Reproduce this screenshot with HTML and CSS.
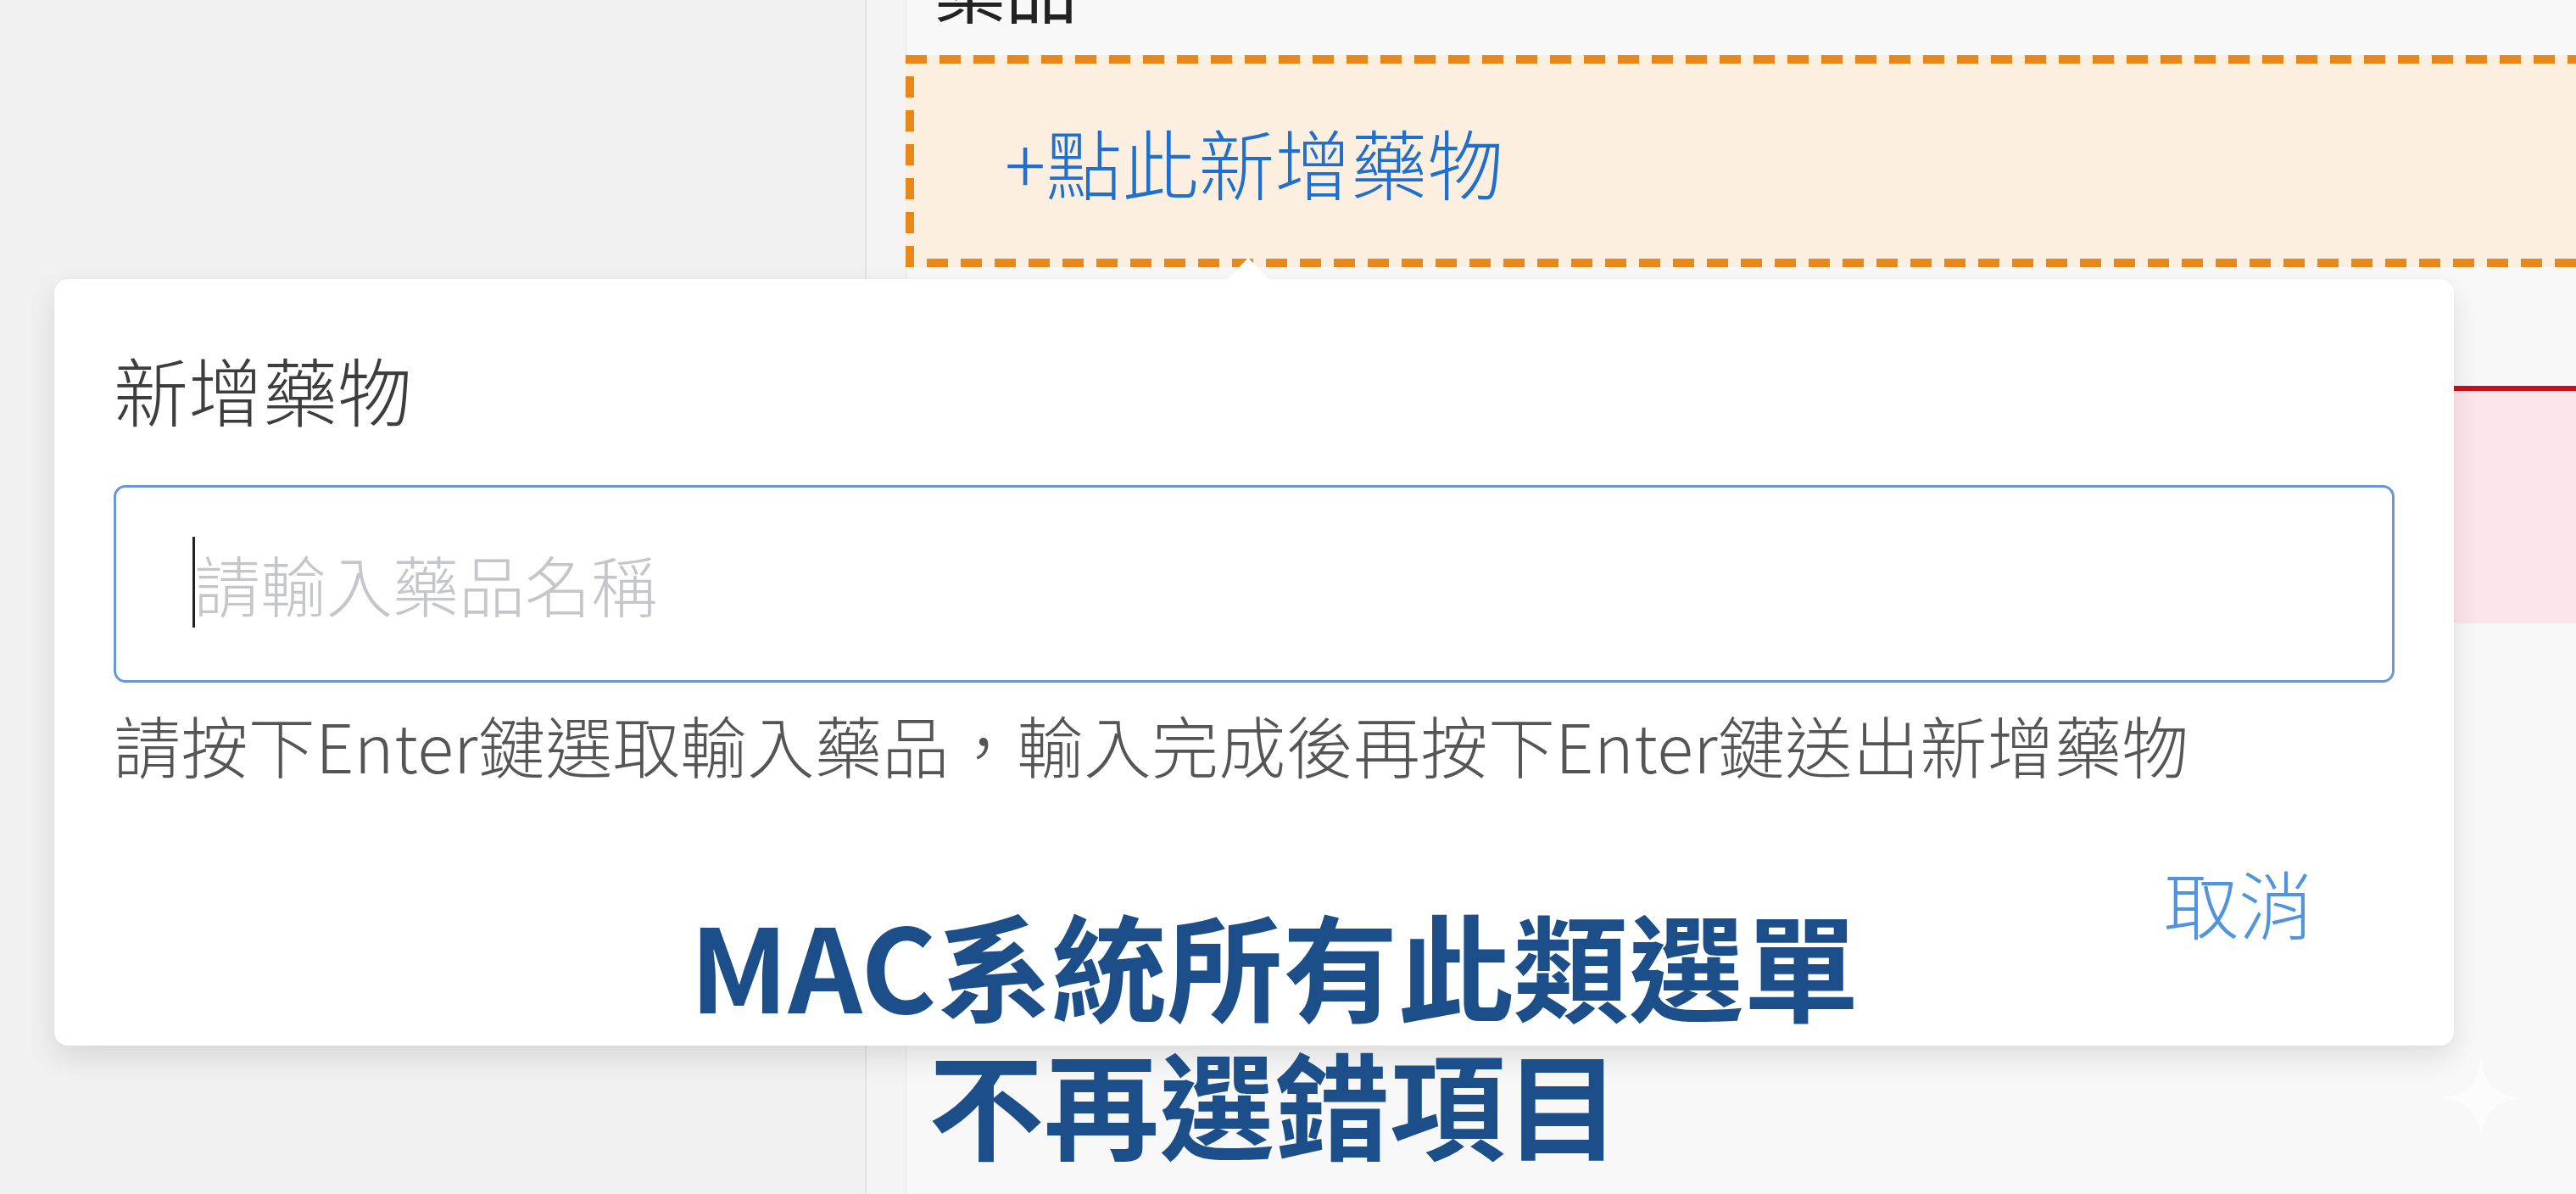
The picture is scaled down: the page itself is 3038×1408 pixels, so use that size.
FILE: index.html
```html
<!DOCTYPE html>
<html lang="zh-Hant">
<head>
    <meta charset="UTF-8">
    <meta name="viewport" content="width=device-width, initial-scale=1.0">
    <title>新增藥物</title>
    <link rel="stylesheet" href="styles.css">
</head>
<body>

    <div class="layout">
        <!-- 左側欄 -->
        <aside class="sidebar"></aside>

        <!-- 藥品清單 -->
        <main class="content">
            <section class="drug-panel">
                <h2 class="panel-title">藥品</h2>

                <div class="add-drug">
                    <svg class="dash-frame" width="100%" height="100%">
                        <rect x="5" y="5" width="3000" height="240" fill="none" stroke="#e8871a" stroke-width="10" stroke-dasharray="25 15" stroke-dashoffset="5"></rect>
                    </svg>
                    <span class="add-label">+點此新增藥物</span>
                </div>

                <div class="drug-row warn"></div>
            </section>
        </main>
    </div>

    <!-- 新增藥物彈出視窗 -->
    <div class="popover">
        <h3 class="popover-title">新增藥物</h3>

        <div class="field">
            <span class="caret"></span>
            <input type="text" class="field-input" placeholder="請輸入藥品名稱">
        </div>

        <p class="hint">請按下Enter鍵選取輸入藥品，輸入完成後再按下Enter鍵送出新增藥物</p>

        <div class="popover-actions">
            <button class="btn-text">取消</button>
        </div>
    </div>

    <div class="caption">MAC系統所有此類選單<br>不再選錯項目</div>

    <svg class="sparkle" width="96" height="96" viewBox="-48 -48 96 96">
        <path d="M0 -48 C4 -16 16 -4 48 0 C16 4 4 16 0 48 C-4 16 -16 4 -48 0 C-16 -4 -4 -16 0 -48 Z"></path>
    </svg>

</body>
</html>
```

FILE: styles.css
```css
body {
    margin: 0;
    width: 3038px;
    height: 1408px;
    overflow: hidden;
    position: relative;
    font-family: "Noto Sans CJK TC", "Noto Sans", sans-serif;
    background-color: #f4f4f4;
}

.layout {
    display: flex;
    height: 100%;
}

.sidebar {
    width: 1020px;
    background-color: #f1f1f1;
    border-right: 2px solid #e2e2e2;
}

.content {
    flex: 1;
    padding-left: 46px;
    background-color: #f4f4f4;
}

.drug-panel {
    display: flow-root;
    height: 100%;
    background-color: #f8f8f8;
    border-left: 1px solid #e6e6e6;
}

.panel-title {
    margin: -57px 0 0 33px;
    font-size: 84px;
    line-height: 1;
    font-weight: 400;
    color: #222;
}

.add-drug {
    position: relative;
    height: 250px;
    margin-top: 38px;
    margin-left: -1px;
    padding-left: 117px;
    display: flex;
    align-items: center;
    background-color: #fdefdf;
}

.dash-frame {
    position: absolute;
    top: 0;
    left: 0;
}

.add-label {
    position: relative;
    font-size: 90px;
    font-weight: 300;
    color: #1f6fd0;
}

.drug-row.warn {
    margin-top: 140px;
    margin-left: -1px;
    height: 274px;
    border-top: 6px solid #c8101e;
    background-color: #fde6e8;
}

/* 彈出視窗 */
.popover {
    position: absolute;
    left: 64px;
    top: 329px;
    width: 2830px;
    box-sizing: border-box;
    padding: 76px 70px 117px 70px;
    background-color: #fff;
    border-radius: 16px;
    box-shadow: 0 14px 34px rgba(0, 0, 0, 0.11), 0 0 2px rgba(0, 0, 0, 0.06);
}

.popover::before {
    content: "";
    position: absolute;
    top: -25px;
    left: 1384px;
    border-left: 24px solid transparent;
    border-right: 24px solid transparent;
    border-bottom: 25px solid #fff;
}

.popover-title {
    margin: 0;
    font-size: 88px;
    line-height: 1.2;
    font-weight: 300;
    color: #3d3d3d;
}

.field {
    position: relative;
    margin-top: 61px;
}

.field-input {
    display: block;
    width: 100%;
    height: 233px;
    box-sizing: border-box;
    padding: 0 0 0 92px;
    border: 3px solid #6a96d8;
    border-radius: 14px;
    outline: none;
    font-family: inherit;
    font-size: 78px;
    font-weight: 300;
    color: #333;
}

.field-input::placeholder {
    color: #c5c6cc;
}

.caret {
    position: absolute;
    left: 93px;
    top: 61px;
    width: 3px;
    height: 107px;
    background-color: #222;
}

.hint {
    margin: 22px 0 0;
    font-size: 79px;
    line-height: 1.3;
    font-weight: 300;
    letter-spacing: 0.4px;
    color: #555;
}

.popover-actions {
    display: flex;
    justify-content: flex-end;
    margin-top: 81px;
}

.btn-text {
    margin-right: 96px;
    padding: 0;
    border: none;
    background: none;
    font-family: inherit;
    font-size: 88px;
    line-height: 1.2;
    font-weight: 300;
    color: #4f94dc;
}

.caption {
    position: absolute;
    top: 1054px;
    left: 0;
    right: 32px;
    text-align: center;
    font-size: 136px;
    line-height: 1.2;
    font-weight: 700;
    color: #1c4f8a;
}

.sparkle {
    position: absolute;
    left: 2878px;
    top: 1247px;
    fill: rgba(255, 255, 255, 0.5);
}
```
